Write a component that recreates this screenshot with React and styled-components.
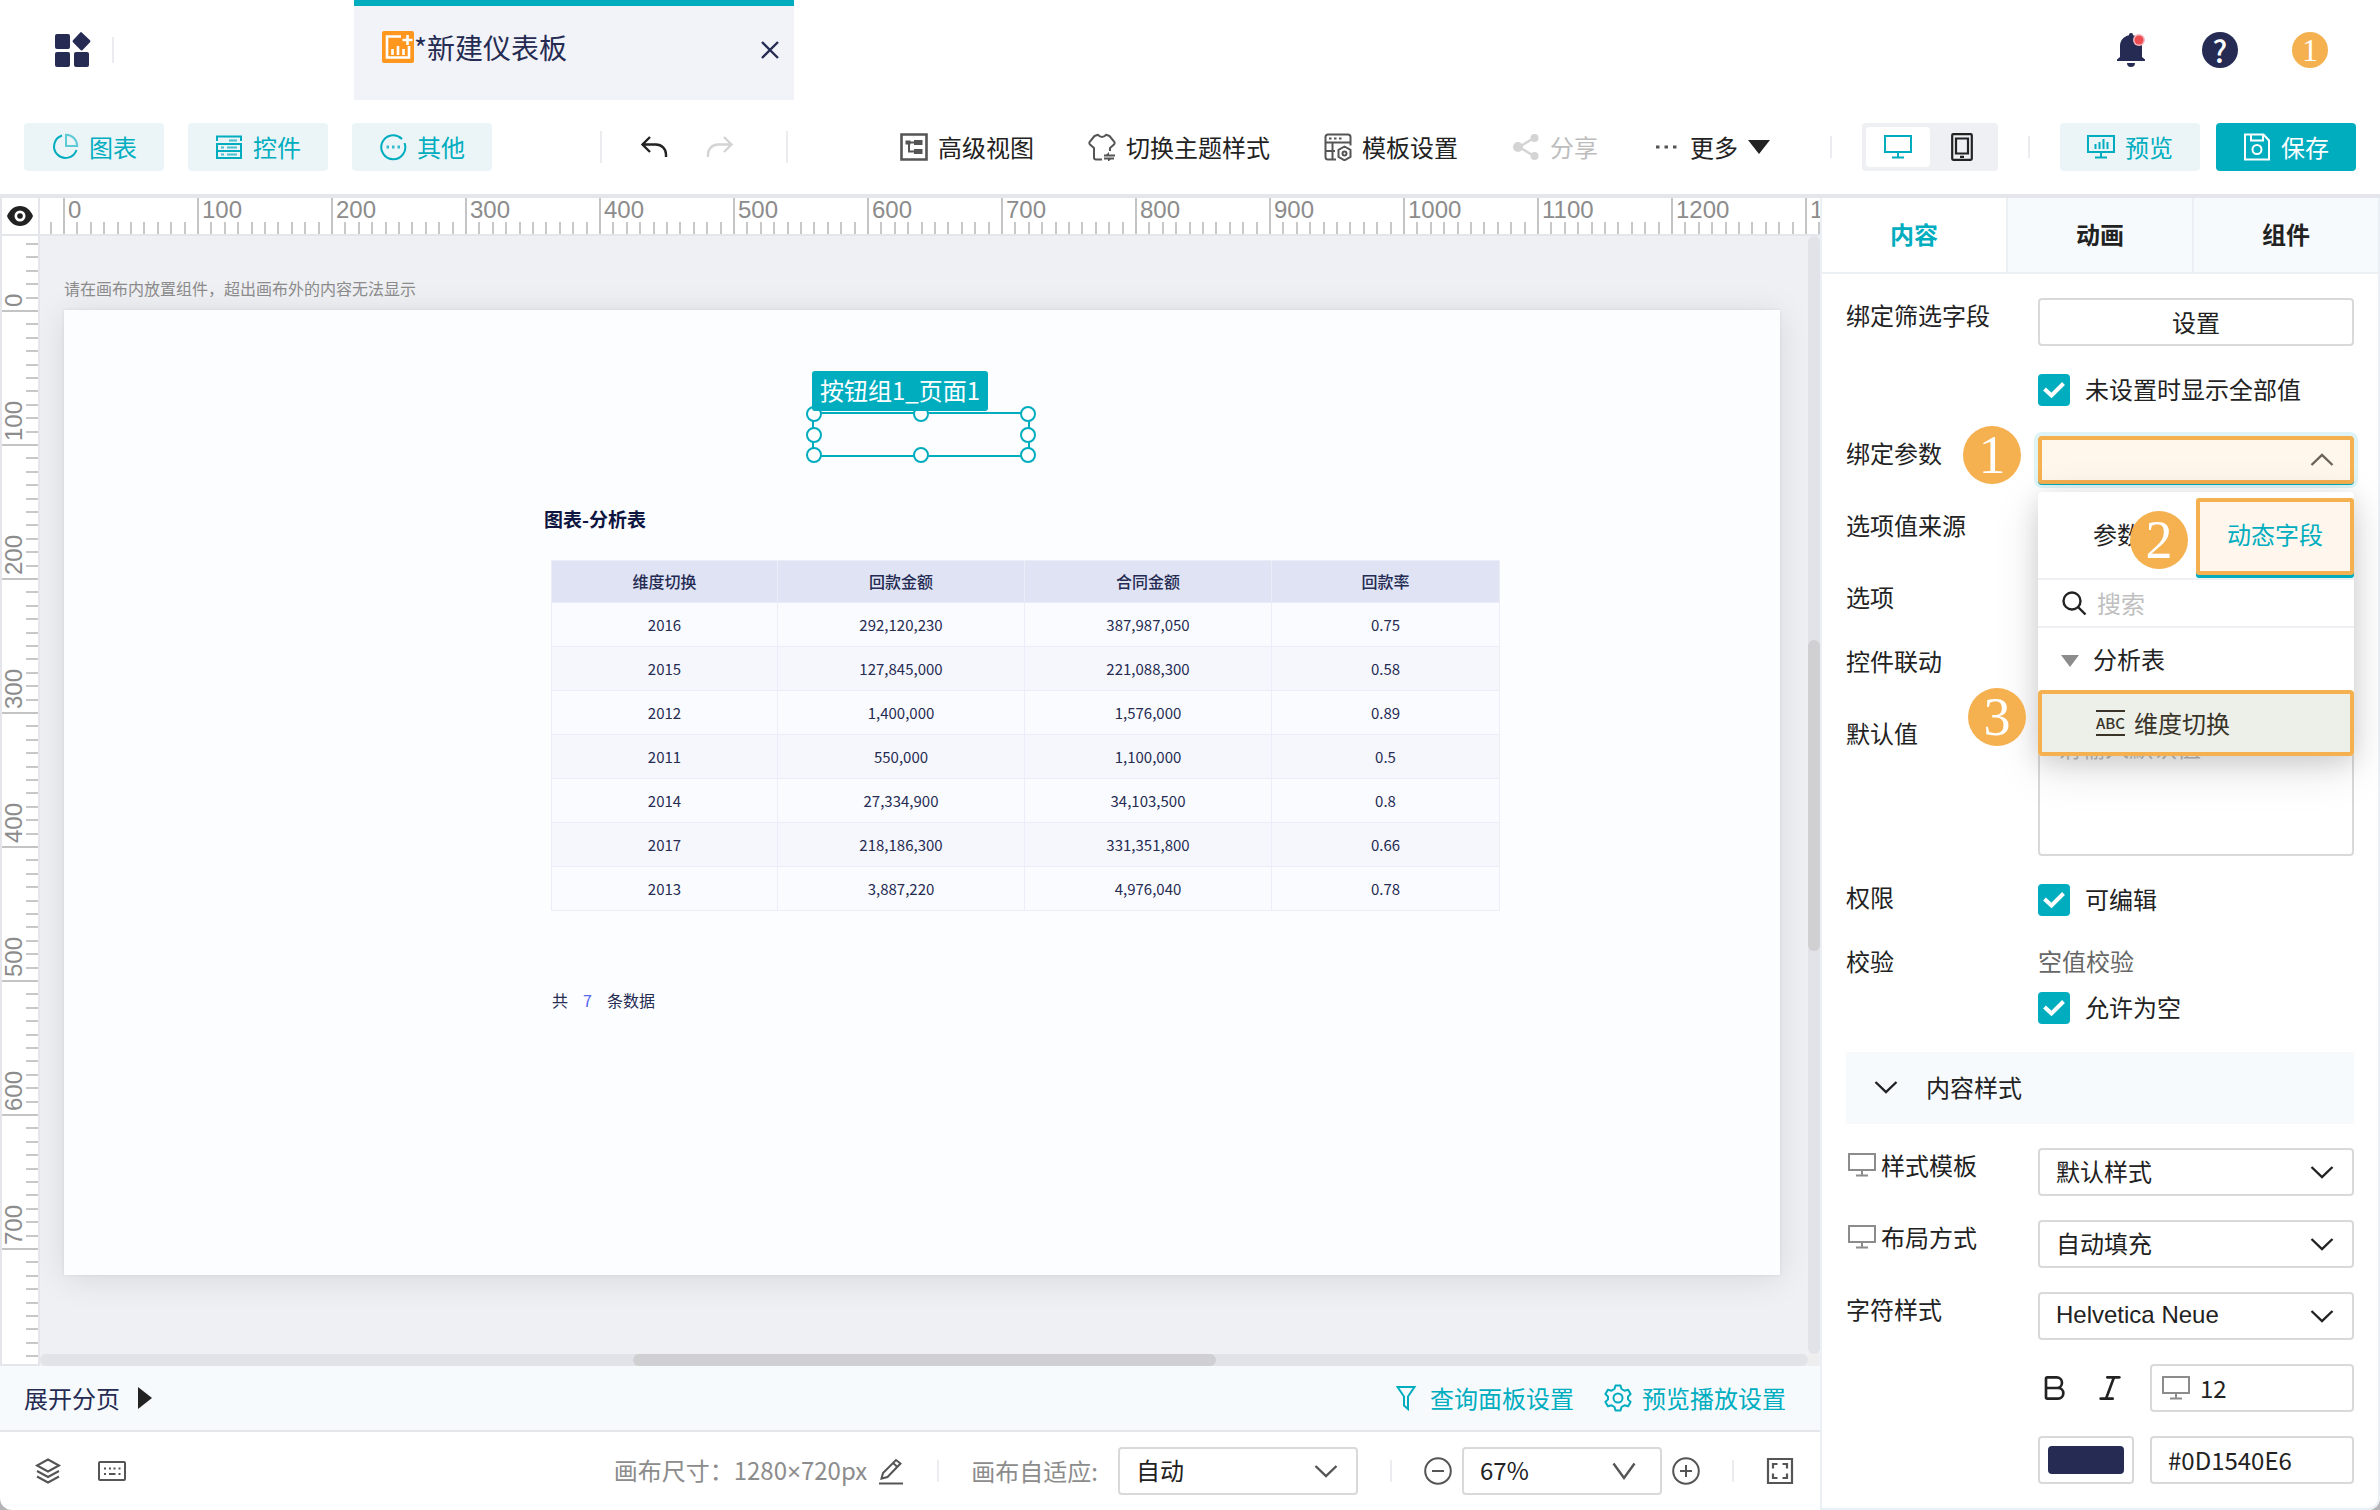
import React from "react";
import styled, { createGlobalStyle, css } from "styled-components";
import { Bold, Italic } from "lucide-react";

const c = {
  teal: "#00adbf",
  tealSoft: "#ebf5f8",
  navy: "#252b52",
  ink: "#222222",
  muted: "#8c8c8c",
  faint: "#bfbfbf",
  line: "#e5e6ec",
  field: "#d9d9d9",
  pale: "#f6fafd",
  stage: "#eff0f4",
  orange: "#f5b04f",
};

const sans = `"Noto Sans CJK SC", "Liberation Sans", sans-serif`;

const Global = createGlobalStyle`
  *, *::before, *::after { box-sizing: border-box; }
  body { margin: 0; background: #b4b4b8; font-family: ${sans}; font-size: 24px; line-height: 36px; color: ${c.ink}; }
  button, input, select, textarea { font: inherit; color: inherit; margin: 0; }
  button { cursor: pointer; padding: 0; border: 0; background: none; }
  svg { display: block; flex: none; }
`;

/* ---------- icons ---------- */

const Svg = ({ w = 28, h = 28, vb, sw = 2, children, ...rest }) => (
  <svg width={w} height={h} viewBox={vb || `0 0 ${w} ${h}`} fill="none" stroke="currentColor" strokeWidth={sw} aria-hidden="true" {...rest}>
    {children}
  </svg>
);
const LogoIcon = () => (
  <Svg w={38} h={38} stroke="none">
    <g fill={c.navy}>
      <rect x="1" y="3" width="15" height="15" rx="2" />
      <rect x="1" y="21" width="15" height="15" rx="2" />
      <rect x="20" y="21" width="15" height="15" rx="2" />
      <path d="M27.5 1.2 36 9.2a1.4 1.4 0 0 1 0 2L28.600 19a1.400 1.400 0 0 1-2 0L19 11.200a1.400 1.400 0 0 1 0-2L26.500 1.200a.8.8 0 0 1 1 0Z" />
    </g>
  </Svg>
);
const DashboardIcon = () => (
  <Svg w={32} h={32} stroke="#fff" sw={2.6}>
    <rect width="32" height="32" rx="2" fill="#ff961e" stroke="none" />
    <path d="M19 5.500H5v21h22V15" />
    <path d="M10.500 24v-6M16 24v-9M21.500 24v-6M25.500 4v10M20.500 9h10" />
  </Svg>
);
const CloseIcon = () => (
  <Svg w={20} h={20} sw={2.4}><path d="m2 2 16 16M18 2 2 18" /></Svg>
);
const BellIcon = () => (
  <Svg w={32} h={36} stroke="none">
    <path fill={c.navy} d="M15 1c1.500 0 2 .8 2 2.300C22.500 4.500 26 8.500 26 14v11l3 2.500V29H1v-1.500L4 25V14C4 8.500 7.500 4.500 13 3.300 13 1.800 13.500 1 15 1ZM11 31h8a4 4 0 0 1-8 0Z" />
    <circle cx="23" cy="8" r="6" fill="#f7b9bb" />
    <circle cx="23" cy="8" r="4.500" fill="#ee4e52" />
  </Svg>
);
const PieIcon = () => (
  <Svg><path d="M11 2.500A11.500 11.500 0 1 0 25.500 17" /><path opacity=".6" d="M15 1.800V13h11.200A11.200 11.200 0 0 0 15 1.800Z" /></Svg>
);
const WidgetIcon = () => (
  <Svg>
    <path d="M2 8V3.500h24V8M2 11h24v7H2zM2 21v4h24v-4M2 18v7M26 18v7" />
    <g opacity=".7"><path d="M14 7.500h8M6 14.500h3M12 14.500h10M6 21.500h3M12 21.500h10" /></g>
  </Svg>
);
const OtherIcon = () => (
  <Svg><path d="M22.500 5.500A12 12 0 1 0 25.500 10" /><path d="M20 3.800a12 12 0 0 1 3 2.400" /><path opacity=".8" strokeWidth="3" d="M7.500 14h2.500M13 14h2.500M18.500 14H21" /></Svg>
);
const UndoIcon = ({ flip }) => (
  <Svg w={28} h={22} sw={2.4}>
    <path d={flip ? "M18 1l7.500 7.500L18 16M25 8.500H12a10 10 0 0 0-10 10V21" : "M10 1 2.500 8.500 10 16M3 8.500h13a10 10 0 0 1 10 10V21"} />
  </Svg>
);
const TreeViewIcon = () => (
  <Svg sw={2.6}>
    <path d="M1.500 1.500h25v25h-25z" /><path strokeWidth="2" d="M7 9.500h8M9 9.500v9h6" />
    <path fill="currentColor" stroke="none" d="M5.500 7.500h5v4h-5zM14 7h8.500v5H14zM14 16h8.500v5H14z" />
  </Svg>
);
const ShirtIcon = () => (
  <Svg>
    <path strokeLinejoin="round" d="M14 26.500H8a2 2 0 0 1-2-2V15l-4-3.500c-.8-.8-.8-1.800-.3-2.700L6.500 3 10 1.800c2 3 6 3 8 0L21.500 3l4.800 5.800c.5.900.5 1.900-.3 2.700L22 15v3" />
    <path d="M16 22.500h11M16 25.500h10" /><path fill="currentColor" stroke="none" d="M21 19v4h-4zM20 29v-4h4z" />
  </Svg>
);
const TemplateIcon = () => (
  <Svg>
    <path d="M12 26.500H4a2.500 2.500 0 0 1-2.500-2.500V4c0-1.500 1-2.500 2.500-2.500h20c1.500 0 2.500 1 2.500 2.500v8.500M2 9.500h24M8.500 10v16M2 18h9" />
    <path strokeLinejoin="round" d="m20.500 13.500 6 3.400v7l-6 3.400-6-3.400v-7z" /><circle cx="20.500" cy="20.400" r="2" />
    <path d="M5 5.500h2.500M10 5.500h2.500M15 5.500h2.500" />
  </Svg>
);
const ShareIcon = () => (
  <Svg sw={2.400}><path d="M22 5 7 14l15 9" /><g fill="currentColor" stroke="none"><circle cx="22.500" cy="5" r="4" /><circle cx="6" cy="14" r="5" /><circle cx="22.500" cy="23" r="4" /></g></Svg>
);
const DotsIcon = () => (
  <Svg sw={3}><path d="M4 14h3.500M12.500 14H16M21 14h3.500" /></Svg>
);
const MonitorIcon = ({ bars }) => (
  <Svg w={28} h={24}>
    <path d="M1 1h26v16H1zM14 17v5M8 22.500h12" />
    {bars && <path d="M8.500 14V9M12.500 14V7M16.500 14V4M20.500 14V7" />}
  </Svg>
);
const PhoneIcon = () => (
  <Svg w={22} h={28} sw={2.2}><rect x="1.200" y="1.200" width="19.600" height="25.600" rx="1" /><path d="M5 5.500h12v15H5zM9 23.800h4" /></Svg>
);
const SaveIcon = () => (
  <Svg><path d="M2 1.500h18.500l5.500 6v19H2z" /><path d="M8 2v5.500h12V2" /><circle cx="14" cy="16.500" r="4.500" /></Svg>
);
const EyeIcon = () => (
  <Svg w={28} h={20} stroke="none"><path fill="#222" d="M14 0c6 0 10.500 4 13 10-2.500 6-7 10-13 10S3.500 16 1 10C3.500 4 8 0 14 0Z" /><circle cx="14" cy="10" r="5.500" fill="#fff" /><circle cx="14" cy="10" r="2.800" fill="#222" /></Svg>
);
const FilterIcon = () => (
  <Svg w={24} h={26}><path d="M1.500 2h17L12 11.500V24l-4-3.500v-9z" /></Svg>
);
const GearIcon = () => (
  <Svg>
    <path strokeLinejoin="round" d="M11.500 1.500h5l1 3.500 3 1.700 3.600-1 2.500 4.300L24 12.600v2.800l2.600 2.600-2.500 4.300-3.600-1-3 1.700-1 3.500h-5l-1-3.500-3-1.700-3.600 1L1.400 18 4 15.400v-2.800L1.400 10l2.500-4.300 3.600 1 3-1.700z" />
    <circle cx="14" cy="14" r="4.500" />
  </Svg>
);
const LayersIcon = () => (
  <Svg><path d="M14 2.500 25 8.500 14 14.500 3 8.500zM3 14l11 6 11-6M3 19.500l11 6 11-6" /></Svg>
);
const KeyboardIcon = () => (
  <Svg><rect x="1" y="5" width="26" height="18" rx="1" /><path d="M6 11.500h2M11 11.500h2M15.500 11.500h2M20.500 11.500h2M6 17h2M11 17h6.500M20.500 17h2" /></Svg>
);
const PencilIcon = () => (
  <Svg><path d="M4.500 21.500 6 16 19 3l4.500 3.500-13 13.500zM16 6l4.500 4M2 26.500h24" /></Svg>
);
const CircleSign = ({ plus }) => (
  <Svg><circle cx="14" cy="14" r="12.800" /><path d="M8 14h12" />{plus && <path d="M14 8v12" />}</Svg>
);
const FitIcon = () => (
  <Svg sw={2.200}><path d="M2 2h24v24H2z" /><path d="M7 11.500V7h4.500M16.500 7H21v4.500M21 16.500V21h-4.500M11.500 21H7v-4.500" /></Svg>
);
const Chevron = ({ up }) => (
  <Svg w={24} h={14} sw={2.400}><path d={up ? "M1.500 12 12 2l10.500 10" : "M1.500 2 12 12 22.500 2"} /></Svg>
);
const DeepChevron = () => (
  <Svg w={24} h={18} sw={2.400}><path d="M1.500 1.500 12 16 22.500 1.500" /></Svg>
);
const SearchIcon = () => (
  <Svg w={26} h={26} sw={2.400}><circle cx="10" cy="11" r="8.500" /><path d="m16 17 7.500 7.500" /></Svg>
);
const CheckIcon = () => (
  <Svg w={22} h={16} stroke="#fff" sw={4}><path d="m1.500 7 7 6.500L20.500 1.500" /></Svg>
);

/* ---------- shell ---------- */

const Shell = styled.div`
  min-height: 100vh;
  display: flex;
  flex-direction: column;
  background: #fff;
  border-radius: 0 0 12px 12px;
  overflow: hidden;
  white-space: nowrap;
`;
const Header = styled.header`
  height: 100px;
  display: flex;
  align-items: center;
  padding: 0 52px 0 54px;
`;
const Divider = styled.span`
  flex: none;
  width: 2px;
  height: ${(p) => p.$h || 22}px;
  background: #ececf0;
`;
const FileTab = styled.div`
  align-self: stretch;
  width: 440px;
  margin-left: 240px;
  padding: 0 14px 12px 28px;
  display: flex;
  align-items: center;
  background: #f2f3f8;
  border-top: 6px solid ${c.teal};
  color: ${c.navy};
  font-size: 28px;
  line-height: 32px;
  button { margin: 6px 0 0 auto; }
`;
const HeaderTools = styled.div`
  margin-left: auto;
  display: flex;
  align-items: center;
  gap: 54px;
`;
const HeaderButton = styled.button`
  display: grid;
  place-items: center;
`;
const Disc = styled.span`
  width: 36px;
  height: 36px;
  border-radius: 50%;
  display: grid;
  place-items: center;
  color: #fff;
  background: ${(p) => p.$bg};
  font: ${(p) => (p.$serif ? `32px/36px "Liberation Serif", serif` : `500 30px/36px ${sans}`)};
`;

const Toolbar = styled.div`
  height: 98px;
  padding: 0 24px;
  display: flex;
  align-items: center;
  border-bottom: 4px solid ${c.line};
`;
const Group = styled.div`
  display: flex;
  align-items: center;
  gap: ${(p) => p.$gap}px;
  margin-left: ${(p) => p.$ml || "0"};
`;
const PillButton = styled.button`
  width: 140px;
  height: 48px;
  border-radius: 4px;
  display: flex;
  align-items: center;
  justify-content: center;
  gap: 10px;
  background: ${(p) => (p.$solid ? c.teal : c.tealSoft)};
  color: ${(p) => (p.$solid ? "#fff" : c.teal)};
`;
const ToolButton = styled.button`
  display: flex;
  align-items: center;
  gap: 10px;
  color: ${(p) => p.$color || c.ink};
  svg { color: ${(p) => p.$iconColor || "#555"}; }
  &:disabled { color: #bdbdbd; }
  &:disabled svg { color: #d4d4d4; }
`;
const Toggle = styled.div`
  display: flex;
  padding: 4px;
  border-radius: 4px;
  background: ${c.stage};
`;
const ToggleButton = styled.button`
  width: 64px;
  height: 40px;
  border-radius: 4px;
  display: grid;
  place-items: center;
  background: ${(p) => (p.$on ? "#fff" : "transparent")};
  color: ${(p) => (p.$on ? c.teal : c.ink)};
`;
const Triangle = styled.span`
  width: 0;
  height: 0;
  flex: none;
  border: solid transparent;
  ${(p) =>
    p.$right
      ? css`border-width: 11px 0 11px 14px; border-left-color: ${c.ink};`
      : css`border-width: ${p.$s + 3}px ${p.$s}px 0; border-top-color: ${p.$color};`}
`;

const Main = styled.main`
  flex: 1;
  display: grid;
  grid-template-columns: minmax(0, 1fr) 560px;
`;
const Work = styled.section`
  display: flex;
  flex-direction: column;
`;
const RulerFrame = styled.div`
  flex: 1;
  display: grid;
  grid-template: 38px 1fr / 40px minmax(0, 1fr);
`;
const RulerCorner = styled.button`
  display: grid;
  place-items: center;
  border: solid ${c.line};
  border-width: 0 2px 2px 2px;
  background: #fff;
`;
const RulerH = styled.div`
  display: flex;
  overflow-x: clip;
  contain: size;
  background: #fff;
  border-bottom: 2px solid ${c.line};
`;
const SegmentH = styled.div`
  flex: none;
  width: 134px;
  display: flex;
  flex-direction: column;
  justify-content: space-between;
  border-left: 2px solid #c4c4c4;
  color: ${c.muted};
  font: 24px/24px "Liberation Sans", sans-serif;
  &:first-child { margin-left: -111px; }
  > span { padding-left: 3px; }
`;
const TicksH = styled.div`
  height: 12px;
  margin-left: -2px;
  display: flex;
  i { flex: 1; border-left: 2px solid #c8c8c8; }
  i:first-child { border-color: transparent; }
`;
const RulerV = styled.div`
  display: flex;
  flex-direction: column;
  overflow-y: clip;
  contain: size;
  background: #fff;
  border: solid ${c.line};
  border-width: 0 2px 2px;
`;
const SegmentV = styled.div`
  flex: none;
  height: 134px;
  display: flex;
  justify-content: space-between;
  border-bottom: 2px solid #c4c4c4;
  color: ${c.muted};
  font: 24px/24px "Liberation Sans", sans-serif;
  &:first-child { margin-top: -58px; }
  > span { writing-mode: vertical-rl; transform: rotate(180deg); padding-top: 3px; }
`;
const TicksV = styled.div`
  width: 12px;
  display: flex;
  flex-direction: column;
  margin-bottom: -2px;
  i { flex: 1; border-bottom: 2px solid #c8c8c8; }
  i:last-child { border-color: transparent; }
`;
const Stage = styled.div`
  display: grid;
  grid-template: 1fr 12px / minmax(0, 1fr) 12px;
  background: ${c.stage};
`;
const StageBody = styled.div`
  padding: 40px 28px 78px 24px;
  overflow: hidden;
`;
const Hint = styled.p`
  margin: 0 0 10px;
  font-size: 16px;
  line-height: 24px;
  color: ${c.muted};
`;
const ScrollTrack = styled.div`
  border-radius: 6px;
  background: #e2e3e8;
  overflow: hidden;
  ${(p) => (p.$v ? "padding-top: 404px;" : "padding-left: 593px;")}
  &::before {
    content: "";
    display: block;
    border-radius: 6px;
    background: #d0d0d2;
    ${(p) => (p.$v ? "height: 311px;" : "height: 12px; width: 583px;")}
  }
`;
const ScrollCorner = styled.div`background: #eeeeee;`;

/* ---------- artboard: widgets are freely placed by the user ---------- */

const Artboard = styled.div`
  position: relative;
  aspect-ratio: 1280 / 720;
  background: #fcfdff;
  box-shadow: 0 4px 32px rgba(0, 0, 0, 0.1), 0 0 3px rgba(0, 0, 0, 0.08);
`;
const Selection = styled.div`
  position: absolute;
  left: 748px;
  top: 102px;
  width: 218px;
  height: 45px;
  border: 2px solid ${c.teal};
`;
const Handle = styled.i`
  position: absolute;
  width: 16px;
  height: 16px;
  margin: -8px;
  border: 2px solid ${c.teal};
  border-radius: 50%;
  background: #fff;
  left: ${(p) => p.$x}%;
  top: ${(p) => p.$y}%;
`;
const SelectionTag = styled.span`
  position: absolute;
  left: -2px;
  bottom: 100%;
  margin-bottom: 3px;
  padding: 1px 8px 3px;
  border-radius: 3px;
  background: ${c.teal};
  color: #fff;
`;
const TableWidget = styled.div`
  position: absolute;
  left: 480px;
  top: 195px;
  width: 956px;
`;
const WidgetTitle = styled.h2`
  margin: 0 0 27px;
  font-size: 19px;
  line-height: 28px;
  color: #0d1540;
`;
const DataTable = styled.table`
  width: 949px;
  margin-left: 7px;
  border-collapse: collapse;
  table-layout: fixed;
  text-align: center;
  color: ${c.navy};
  th, td { border: 1px solid #ebedf8; padding: 0; }
  th { height: 42px; padding-bottom: 2px; background: #dfe3f4; font-size: 16px; font-weight: 500; line-height: 24px; }
  td { height: 44px; font-size: 15px; line-height: 24px; background: #fafbff; }
  tbody tr:nth-child(even) td { background: #f6f7fd; }
`;
const Total = styled.p`
  display: flex;
  gap: 15px;
  margin: 77px 0 0 8px;
  font-size: 16px;
  line-height: 24px;
  color: ${c.navy};
  b { font-weight: 400; color: #5668f0; }
`;

/* ---------- bottom bars ---------- */

const PagesBar = styled.div`
  height: 66px;
  padding: 0 34px 0 24px;
  display: flex;
  align-items: center;
  justify-content: space-between;
  background: ${c.pale};
  border-bottom: 2px solid ${c.line};
`;
const StatusBar = styled.footer`
  height: 78px;
  padding: 0 26px 0 34px;
  display: flex;
  align-items: center;
  color: ${c.muted};
  svg { color: #555; }
`;
const Times = styled.span`font-family: "Liberation Sans", sans-serif;`;

/* ---------- form controls ---------- */

const frame = css`
  height: 48px;
  border: 2px solid ${c.field};
  border-radius: 4px;
  background: #fff;
`;
const SelectWrap = styled.div`
  position: relative;
  width: ${(p) => p.$w || "100%"};
  color: ${c.ink};
  > svg {
    position: absolute;
    right: ${(p) => (p.$deep ? 26 : 20)}px;
    top: ${(p) => (p.$deep ? 15 : 17)}px;
    pointer-events: none;
    color: ${(p) => p.$chevron || c.ink};
  }
`;
const NativeSelect = styled.select`
  ${frame}
  display: block;
  width: 100%;
  padding: 0 48px 2px 16px;
  appearance: none;
  line-height: 36px;
  outline: none;
  ${(p) => p.$latin && css`font-family: "Liberation Sans", sans-serif;`}
  ${(p) =>
    p.$marked &&
    css`
      border: 4px solid ${c.orange};
      background: #fff6ec;
      box-shadow: 0 1px 0 ${c.teal}, 0 0 0 4px #dff4f7;
    `}
`;
const Picker = ({ id, label, options, w, latin, marked, up, deep, chevron }) => (
  <SelectWrap $w={w} $chevron={chevron} $deep={deep}>
    <NativeSelect id={id} aria-label={label} $latin={latin} $marked={marked}>
      {options.map((o) => <option key={o}>{o}</option>)}
    </NativeSelect>
    {deep ? <DeepChevron /> : <Chevron up={up} />}
  </SelectWrap>
);

/* ---------- settings panel ---------- */

const Panel = styled.aside`
  border: solid #ebf0f6;
  border-width: 0 2px 2px;
  border-bottom-right-radius: 12px;
`;
const PanelTabs = styled.div`
  display: grid;
  grid-template-columns: repeat(3, 1fr);
  gap: 2px;
  background: #ebf0f6;
  border-bottom: 2px solid #ebf0f6;
`;
const PanelTab = styled.button`
  height: 74px;
  padding-bottom: 2px;
  font-weight: 700;
  background: ${(p) => (p.$on ? "#fff" : c.pale)};
  color: ${(p) => (p.$on ? c.teal : c.ink)};
`;
const Form = styled.form`
  padding: 24px;
  display: flex;
  flex-direction: column;
  gap: 24px;
`;
const Row = styled.div`
  position: relative;
  display: grid;
  grid-template-columns: 192px minmax(0, 1fr);
  align-items: start;
  min-height: ${(p) => p.$h || 48}px;
`;
const RowLabel = styled.label`
  display: flex;
  align-items: center;
  gap: 5px;
  line-height: 34px;
  svg { margin-left: 2px; color: ${c.muted}; }
`;
const Stack = styled.div`
  display: flex;
  flex-direction: column;
  gap: 10px;
  > span { color: #666; line-height: 34px; }
`;
const PlainButton = styled.button`
  ${frame}
  border: 2px solid ${c.field};
`;
const CheckLabel = styled.label`
  height: 40px;
  display: flex;
  align-items: center;
  gap: 15px;
  line-height: 34px;
`;
const CheckText = styled.span`padding-bottom: 2px;`;
const CheckBox = styled.span`
  display: grid;
  place-items: center;
  width: 32px;
  height: 32px;
  > * { grid-area: 1 / 1; }
  input {
    appearance: none;
    width: 32px;
    height: 32px;
    border-radius: 4px;
    background: ${c.teal};
  }
  svg { z-index: 1; pointer-events: none; }
`;
const Check = ({ children }) => (
  <CheckLabel>
    <CheckBox><input type="checkbox" defaultChecked /><CheckIcon /></CheckBox>
    <CheckText>{children}</CheckText>
  </CheckLabel>
);
const DefaultValue = styled.textarea`
  ${frame}
  height: 140px;
  padding: 11px 17px;
  resize: none;
  display: block;
  &::placeholder { color: ${c.faint}; }
`;
const SectionHead = styled.button`
  height: 72px;
  padding: 0 28px 2px;
  display: flex;
  align-items: center;
  gap: 28px;
  background: ${c.pale};
`;
const Split = styled.div`
  display: flex;
  gap: 16px;
  align-items: center;
`;
const StyleButtons = styled.div`
  width: 96px;
  display: flex;
  gap: 24px;
`;
const Swatch = styled.button`
  ${frame}
  border: 2px solid ${c.field};
  width: 96px;
  padding: 8px;
  display: flex;
  &::before { content: ""; flex: 1; align-self: stretch; border-radius: 4px; background: ${c.navy}; }
`;
const InputBox = styled.label`
  ${frame}
  flex: 1;
  min-width: 0;
  display: flex;
  align-items: center;
  gap: 10px;
  padding-left: ${(p) => (p.$icon ? 10 : 16)}px;
  svg { color: ${c.muted}; }
  input { width: 100%; min-width: 0; border: 0; padding: 0; background: none; outline: none; }
`;
const Badge = styled.span`
  position: absolute;
  z-index: 3;
  left: ${(p) => p.$x}px;
  top: ${(p) => p.$y}px;
  width: 58px;
  height: 58px;
  border-radius: 50%;
  background: ${c.orange};
  color: #fff;
  text-align: center;
  font: 54px/58px "Liberation Serif", serif;
`;
const Popup = styled.div`
  position: absolute;
  z-index: 2;
  top: 56px;
  left: 192px;
  right: 0;
  border-radius: 4px;
  background: #fff;
  box-shadow: 0 12px 48px rgba(0, 0, 0, 0.12), 0 6px 24px rgba(0, 0, 0, 0.12);
`;
const PopupTabs = styled.div`
  height: 88px;
  padding-top: 6px;
  display: grid;
  grid-template-columns: 1fr 1fr;
  border-bottom: 2px solid ${c.stage};
`;
const PopupTab = styled.button`
  padding-bottom: ${(p) => (p.$marked ? 5 : 8)}px;
  border: 4px solid transparent;
  border-radius: 3px;
  ${(p) =>
    p.$marked &&
    css`
      border-color: ${c.orange};
      background: #fff7ee;
      color: ${c.teal};
      margin-bottom: 3px;
      box-shadow: 0 3px 0 ${c.teal};
    `}
`;
const SearchBox = styled.label`
  height: 48px;
  padding: 0 24px;
  display: flex;
  align-items: center;
  gap: 9px;
  border-bottom: 2px solid ${c.stage};
  input { width: 100%; border: 0; padding: 0; outline: none; background: none; }
  input::placeholder { color: ${c.faint}; }
`;
const TreeHead = styled.button`
  width: 100%;
  height: 62px;
  padding-left: 23px;
  display: flex;
  align-items: center;
  gap: 14px;
  > span { margin-top: 4px; }
`;
const TreeItem = styled.button`
  width: 100%;
  height: 66px;
  padding: 0 0 1px 54px;
  display: flex;
  align-items: center;
  gap: 9px;
  border: 4px solid ${c.orange};
  border-radius: 4px;
  background: #ecf0e9;
  color: #3a3428;
`;
const Abc = styled.span`
  border: solid currentColor;
  border-width: 2px 0;
  font-size: 15px;
  font-weight: 500;
  line-height: 22px;
`;

const range = (from, n) => Array.from({ length: n }, (_, i) => from + i * 100);
const ticks = Array.from({ length: 10 }, (_, i) => <i key={i} />);
const columns = ["维度切换", "回款金额", "合同金额", "回款率"];
const rows = [
  ["2016", "292,120,230", "387,987,050", "0.75"],
  ["2015", "127,845,000", "221,088,300", "0.58"],
  ["2012", "1,400,000", "1,576,000", "0.89"],
  ["2011", "550,000", "1,100,000", "0.5"],
  ["2014", "27,334,900", "34,103,500", "0.8"],
  ["2017", "218,186,300", "331,351,800", "0.66"],
  ["2013", "3,887,220", "4,976,040", "0.78"],
];
const handles = [[0, 0], [50, 0], [100, 0], [0, 50], [100, 50], [0, 100], [50, 100], [100, 100]];

function TopBars() {
  return (
    <>
      <Header>
        <HeaderButton aria-label="应用"><LogoIcon /></HeaderButton>
        <Group $gap={0} $ml="20px"><Divider $h={26} /></Group>
        <FileTab>
          <DashboardIcon />
          <span>*新建仪表板</span>
          <button aria-label="关闭"><CloseIcon /></button>
        </FileTab>
        <HeaderTools>
          <HeaderButton aria-label="通知"><BellIcon /></HeaderButton>
          <HeaderButton aria-label="帮助"><Disc $bg={c.navy}>?</Disc></HeaderButton>
          <HeaderButton><Disc $bg={c.orange} $serif>1</Disc></HeaderButton>
        </HeaderTools>
      </Header>
      <Toolbar>
        <Group $gap={24}>
          <PillButton><PieIcon />图表</PillButton>
          <PillButton><WidgetIcon />控件</PillButton>
          <PillButton><OtherIcon />其他</PillButton>
        </Group>
        <Group $gap={38} $ml="108px">
          <Divider $h={32} />
          <ToolButton aria-label="撤销" $iconColor={c.ink}><UndoIcon /></ToolButton>
          <ToolButton aria-label="重做" disabled><UndoIcon flip /></ToolButton>
          <Group $gap={0} $ml="14px"><Divider $h={32} /></Group>
        </Group>
        <Group $gap={54} $ml="auto">
          <ToolButton><TreeViewIcon />高级视图</ToolButton>
          <ToolButton><ShirtIcon />切换主题样式</ToolButton>
          <ToolButton><TemplateIcon />模板设置</ToolButton>
          <ToolButton disabled><ShareIcon />分享</ToolButton>
          <ToolButton><DotsIcon />更多<Triangle $s={11} $color={c.ink} /></ToolButton>
        </Group>
        <Group $gap={30} $ml="60px">
          <Divider />
          <Toggle>
            <ToggleButton $on aria-label="电脑"><MonitorIcon /></ToggleButton>
            <ToggleButton aria-label="手机"><PhoneIcon /></ToggleButton>
          </Toggle>
          <Divider />
          <Group $gap={16}>
            <PillButton><MonitorIcon bars />预览</PillButton>
            <PillButton $solid><SaveIcon />保存</PillButton>
          </Group>
        </Group>
      </Toolbar>
    </>
  );
}

function Canvas() {
  return (
    <Stage>
      <StageBody>
        <Hint>请在画布内放置组件，超出画布外的内容无法显示</Hint>
        <Artboard>
          <Selection>
            {handles.map(([x, y]) => <Handle key={`${x}-${y}`} $x={x} $y={y} />)}
            <SelectionTag>按钮组1_页面1</SelectionTag>
          </Selection>
          <TableWidget>
            <WidgetTitle>图表-分析表</WidgetTitle>
            <DataTable>
              <colgroup><col width="226" /><col width="247" /><col width="247" /><col /></colgroup>
              <thead><tr>{columns.map((t) => <th key={t}>{t}</th>)}</tr></thead>
              <tbody>
                {rows.map((r) => <tr key={r[0]}>{r.map((v, i) => <td key={i}>{v}</td>)}</tr>)}
              </tbody>
            </DataTable>
            <Total>共<b>7</b>条数据</Total>
          </TableWidget>
        </Artboard>
      </StageBody>
      <ScrollTrack $v />
      <ScrollTrack />
      <ScrollCorner />
    </Stage>
  );
}

function Workspace() {
  return (
    <Work>
      <RulerFrame>
        <RulerCorner aria-label="显示标尺"><EyeIcon /></RulerCorner>
        <RulerH>
          {range(-100, 15).map((n) => (
            <SegmentH key={n}><span>{n < 0 ? "" : n}</span><TicksH>{ticks}</TicksH></SegmentH>
          ))}
        </RulerH>
        <RulerV>
          {range(0, 9).map((n) => (
            <SegmentV key={n}><span>{n > 700 ? "" : n}</span><TicksV>{ticks}</TicksV></SegmentV>
          ))}
        </RulerV>
        <Canvas />
      </RulerFrame>
      <PagesBar>
        <ToolButton $color={c.navy}>展开分页<Group $gap={0} $ml="8px"><Triangle $right /></Group></ToolButton>
        <Group $gap={30}>
          <ToolButton $color={c.teal} $iconColor={c.teal}><FilterIcon />查询面板设置</ToolButton>
          <ToolButton $color={c.teal} $iconColor={c.teal}><GearIcon />预览播放设置</ToolButton>
        </Group>
      </PagesBar>
      <StatusBar>
        <Group $gap={36}>
          <ToolButton aria-label="图层"><LayersIcon /></ToolButton>
          <ToolButton aria-label="快捷键"><KeyboardIcon /></ToolButton>
        </Group>
        <Group $gap={32} $ml="auto">
          <Group $gap={10}><span>画布尺寸：1280<Times>×</Times>720px</span><ToolButton aria-label="编辑尺寸"><PencilIcon /></ToolButton></Group>
          <Divider />
          <Group $gap={20}>
            <label htmlFor="fit">画布自适应:</label>
            <Picker id="fit" w="240px" options={["自动"]} chevron="#555" />
          </Group>
          <Divider />
          <Group $gap={10}>
            <ToolButton aria-label="缩小"><CircleSign /></ToolButton>
            <Picker label="缩放" w="200px" options={["67%"]} deep chevron="#555" />
            <ToolButton aria-label="放大"><CircleSign plus /></ToolButton>
          </Group>
          <Divider />
          <ToolButton aria-label="全屏"><FitIcon /></ToolButton>
        </Group>
      </StatusBar>
    </Work>
  );
}

function Settings() {
  return (
    <Panel>
      <PanelTabs>
        <PanelTab $on>内容</PanelTab>
        <PanelTab>动画</PanelTab>
        <PanelTab>组件</PanelTab>
      </PanelTabs>
      <Form onSubmit={(e) => e.preventDefault()}>
        <Row>
          <RowLabel htmlFor="bind-field">绑定筛选字段</RowLabel>
          <PlainButton id="bind-field" type="button">设置</PlainButton>
        </Row>
        <Row $h={42}><span /><Check>未设置时显示全部值</Check></Row>
        <Row>
          <RowLabel htmlFor="bind-param">绑定参数</RowLabel>
          <Picker id="bind-param" options={[""]} marked up chevron="#6b625a" />
          <Badge $x={117} $y={-10}>1</Badge>
          <Popup>
            <PopupTabs>
              <PopupTab type="button">参数</PopupTab>
              <PopupTab type="button" $marked>动态字段</PopupTab>
            </PopupTabs>
            <SearchBox><SearchIcon /><input type="text" placeholder="搜索" aria-label="搜索" /></SearchBox>
            <TreeHead type="button"><Triangle $s={9} $color={c.muted} />分析表</TreeHead>
            <TreeItem type="button"><Abc>ABC</Abc>维度切换</TreeItem>
          </Popup>
          <Badge $x={284} $y={75}>2</Badge>
          <Badge $x={122} $y={252}>3</Badge>
        </Row>
        <Row><RowLabel as="span">选项值来源</RowLabel></Row>
        <Row $h={40}><RowLabel as="span">选项</RowLabel></Row>
        <Row><RowLabel as="span">控件联动</RowLabel></Row>
        <Row>
          <RowLabel htmlFor="default-value">默认值</RowLabel>
          <DefaultValue id="default-value" placeholder="请输入默认值" />
        </Row>
        <Row $h={40}><RowLabel as="span">权限</RowLabel><Check>可编辑</Check></Row>
        <Row>
          <RowLabel as="span">校验</RowLabel>
          <Stack><span>空值校验</span><Check>允许为空</Check></Stack>
        </Row>
        <SectionHead type="button"><Chevron />内容样式</SectionHead>
        <Row>
          <RowLabel htmlFor="tpl"><MonitorIcon />样式模板</RowLabel>
          <Picker id="tpl" options={["默认样式"]} />
        </Row>
        <Row>
          <RowLabel htmlFor="layout"><MonitorIcon />布局方式</RowLabel>
          <Picker id="layout" options={["自动填充"]} />
        </Row>
        <Row>
          <RowLabel htmlFor="font">字符样式</RowLabel>
          <Picker id="font" options={["Helvetica Neue"]} latin />
        </Row>
        <Row>
          <span />
          <Split>
            <StyleButtons>
              <button type="button" aria-label="加粗"><Bold size={32} /></button>
              <button type="button" aria-label="斜体"><Italic size={32} /></button>
            </StyleButtons>
            <InputBox $icon><MonitorIcon /><input type="text" aria-label="字号" defaultValue="12" /></InputBox>
          </Split>
        </Row>
        <Row>
          <span />
          <Split>
            <Swatch type="button" aria-label="文字颜色" />
            <InputBox><input type="text" aria-label="颜色值" defaultValue="#0D1540E6" /></InputBox>
          </Split>
        </Row>
      </Form>
    </Panel>
  );
}

export default function App() {
  return (
    <Shell>
      <Global />
      <TopBars />
      <Main>
        <Workspace />
        <Settings />
      </Main>
    </Shell>
  );
}
